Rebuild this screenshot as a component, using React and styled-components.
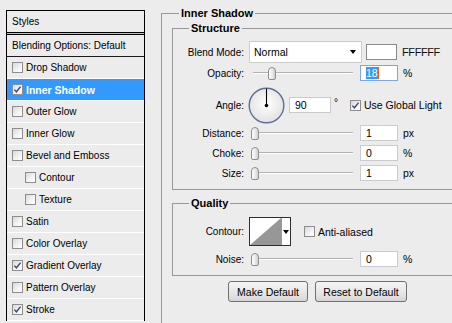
import React from "react";
import styled, { createGlobalStyle } from "styled-components";

const GlobalStyle = createGlobalStyle`
  html, body {
    margin: 0;
    padding: 0;
    background: #ececec;
  }
`;

const styleItems = [
  { name: "Drop Shadow" },
  { name: "Inner Shadow", checked: true, selected: true },
  { name: "Outer Glow" },
  { name: "Inner Glow" },
  { name: "Bevel and Emboss" },
  { name: "Contour", sub: true },
  { name: "Texture", sub: true },
  { name: "Satin" },
  { name: "Color Overlay" },
  { name: "Gradient Overlay", checked: true },
  { name: "Pattern Overlay" },
  { name: "Stroke", checked: true },
];

const Check = ({ checked }) => (
  <CheckBox>
    {checked ? (
      <svg width="9" height="9" viewBox="0 0 9 9">
        <path d="M1.4 4.6 L3.4 6.8 L7.6 1.6" fill="none" stroke="#3d4b73" strokeWidth="1.4" />
      </svg>
    ) : null}
  </CheckBox>
);

const Slider = ({ value }) => (
  <SliderWrap>
    <Track />
    <Thumb style={{ left: 2 + Math.round((value / 100) * 94) }} />
  </SliderWrap>
);

const Dial = () => (
  <DialWrap>
    <svg width="37" height="37" viewBox="0 0 37 37">
      <defs>
        <radialGradient id="dialFill" cx="50%" cy="45%" r="55%">
          <stop offset="0%" stopColor="#ffffff" />
          <stop offset="100%" stopColor="#e2e2e2" />
        </radialGradient>
      </defs>
      <circle cx="18.5" cy="18.5" r="17.3" fill="url(#dialFill)" stroke="#5d6f98" strokeWidth="1.4" />
      <line x1="18.5" y1="18.5" x2="18.5" y2="1.6" stroke="#000" strokeWidth="1.1" />
      <circle cx="18.5" cy="18.5" r="1.8" fill="#000" />
    </svg>
  </DialWrap>
);

const App = () => {
  return (
    <Page>
      <GlobalStyle />
      <LeftPanel>
        <Header>Styles</Header>
        <Divider />
        <BlendingRow>Blending Options: Default</BlendingRow>
        {styleItems.map((item) => (
          <StyleRow key={item.name} $sub={item.sub} $selected={item.selected}>
            <Check checked={item.checked} />
            <span>{item.name}</span>
          </StyleRow>
        ))}
      </LeftPanel>

      <OuterGroup>
        <Legend $left={17}>Inner Shadow</Legend>

        <Group $pad="12px 0 8px 0">
          <Legend $left={16}>Structure</Legend>

          <Row $h={22}>
            <Label>Blend Mode:</Label>
            <Select>
              <span>Normal</span>
              <Arrow />
            </Select>
            <Swatch />
            <HexText>FFFFFF</HexText>
          </Row>

          <Row $mt={2}>
            <Label>Opacity:</Label>
            <Slider value={18} />
            <Input $focused>
              <Selected>18</Selected>
              <Caret />
            </Input>
            <Unit>%</Unit>
          </Row>

          <Row $h={38} $mt={5}>
            <Label>Angle:</Label>
            <Dial />
            <AngleInput>90</AngleInput>
            <Degree>°</Degree>
            <CheckLabel $ml={12}>
              <Check checked />
              <span>Use Global Light</span>
            </CheckLabel>
          </Row>

          <Row $mt={1}>
            <Label>Distance:</Label>
            <Slider value={0} />
            <Input>1</Input>
            <Unit>px</Unit>
          </Row>

          <Row $mt={4}>
            <Label>Choke:</Label>
            <Slider value={0} />
            <Input>0</Input>
            <Unit>%</Unit>
          </Row>

          <Row $mt={4}>
            <Label>Size:</Label>
            <Slider value={0} />
            <Input>1</Input>
            <Unit>px</Unit>
          </Row>
        </Group>

        <Group $pad="13px 0 8px 0" $mt={13}>
          <Legend $left={16}>Quality</Legend>

          <Row $h={29}>
            <Label>Contour:</Label>
            <ContourPicker>
              <ContourPreview>
                <svg width="31" height="27" viewBox="0 0 31 27">
                  <polygon points="0,27 31,0 31,27" fill="#979797" />
                </svg>
              </ContourPreview>
              <ContourDrop>
                <Arrow />
              </ContourDrop>
            </ContourPicker>
            <CheckLabel $ml={13}>
              <Check />
              <span>Anti-aliased</span>
            </CheckLabel>
          </Row>

          <Row $mt={5}>
            <Label>Noise:</Label>
            <Slider value={0} />
            <Input>0</Input>
            <Unit>%</Unit>
          </Row>
        </Group>

        <Buttons>
          <Button $w={80}>Make Default</Button>
          <Button $w={92}>Reset to Default</Button>
        </Buttons>
      </OuterGroup>
    </Page>
  );
};

const Page = styled.div`
  display: flex;
  align-items: flex-start;
  width: 452px;
  height: 323px;
  overflow: hidden;
  background: #ececec;
  font-family: "Liberation Sans", Arial, sans-serif;
  font-size: 10px;
  color: #000;
`;

const LeftPanel = styled.div`
  flex-shrink: 0;
  box-sizing: border-box;
  width: 139px;
  margin: 10px 0 0 6px;
  border: 1px solid #000;
  border-bottom: none;
  background: #ececec;
`;

const Header = styled.div`
  height: 21px;
  line-height: 21px;
  padding-left: 5px;
`;

const Divider = styled.div`
  height: 1px;
  border-top: 1px solid #000;
  border-bottom: 1px solid #000;
  background: #bdbdbd;
`;

const BlendingRow = styled.div`
  height: 21px;
  line-height: 21px;
  padding-left: 5px;
  border-bottom: 1px solid #1a1a1a;
`;

const StyleRow = styled.div`
  display: flex;
  align-items: center;
  gap: 3px;
  height: 21px;
  padding-left: ${(p) => (p.$sub ? 18 : 5)}px;
  border-bottom: 1px solid #ffffff;
  background: ${(p) => (p.$selected ? "#3399ff" : "transparent")};
  color: ${(p) => (p.$selected ? "#fff" : "#000")};
  font-weight: ${(p) => (p.$selected ? "bold" : "normal")};
  font-size: ${(p) => (p.$selected ? "10.5px" : "10px")};
`;

const CheckBox = styled.span`
  flex-shrink: 0;
  box-sizing: border-box;
  display: flex;
  align-items: center;
  justify-content: center;
  width: 11px;
  height: 11px;
  border: 1px solid #8d8d8d;
  background: linear-gradient(135deg, #d9d9d9 0%, #f4f4f4 60%, #ffffff 100%);
`;

const OuterGroup = styled.div`
  position: relative;
  flex-shrink: 0;
  box-sizing: border-box;
  width: 320px;
  height: 400px;
  margin: 13px 0 0 16px;
  padding: 14px 0 0 10px;
  border: 1px solid #989898;
`;

const Group = styled.div`
  position: relative;
  box-sizing: border-box;
  width: 300px;
  margin-top: ${(p) => p.$mt || 0}px;
  padding: ${(p) => p.$pad};
  border: 1px solid #989898;
`;

const Legend = styled.span`
  position: absolute;
  top: -7px;
  left: ${(p) => p.$left}px;
  padding: 0 2px;
  background: #ececec;
  font-size: 11px;
  line-height: 13px;
  font-weight: bold;
`;

const Row = styled.div`
  display: flex;
  align-items: center;
  height: ${(p) => p.$h || 16}px;
  margin-top: ${(p) => p.$mt || 0}px;
`;

const Label = styled.div`
  flex-shrink: 0;
  width: 71px;
  margin-right: 5px;
  text-align: right;
`;

const Select = styled.div`
  flex-shrink: 0;
  box-sizing: border-box;
  display: flex;
  align-items: center;
  justify-content: space-between;
  width: 113px;
  height: 22px;
  padding: 0 5px 0 4px;
  border: 1px solid #cdcdcd;
  background: #fff;
  font-size: 10.5px;
`;

const Arrow = styled.span`
  width: 0;
  height: 0;
  border-left: 3px solid transparent;
  border-right: 3px solid transparent;
  border-top: 4px solid #000;
`;

const Swatch = styled.div`
  flex-shrink: 0;
  box-sizing: border-box;
  width: 31px;
  height: 16px;
  margin-left: 4px;
  border: 1px solid #888;
  background: #fff;
`;

const HexText = styled.span`
  margin-left: 5px;
  font-size: 11px;
  letter-spacing: -0.4px;
  color: #111;
`;

const SliderWrap = styled.div`
  position: relative;
  flex-shrink: 0;
  width: 104px;
  height: 16px;
`;

const Track = styled.div`
  position: absolute;
  left: 4px;
  right: 0;
  top: 7px;
  height: 0;
  border-top: 1px solid #b2b2b2;
  border-bottom: 1px solid #ffffff;
`;

const Thumb = styled.div`
  position: absolute;
  top: 2px;
  box-sizing: border-box;
  width: 8px;
  height: 13px;
  border: 1px solid #8e8e8e;
  border-radius: 4px 4px 2px 2px;
  background: linear-gradient(90deg, #ffffff 0%, #e6e6e6 60%, #cfcfcf 100%);
`;

const Input = styled.div`
  flex-shrink: 0;
  box-sizing: border-box;
  display: flex;
  align-items: center;
  width: 38px;
  height: 16px;
  margin-left: 7px;
  padding-left: 5px;
  border: 1px solid ${(p) => (p.$focused ? "#7fa9d9" : "#c9cbd0")};
  background: #fff;
  font-size: 10.5px;
`;

const AngleInput = styled(Input)`
  width: 42px;
  margin-left: 4px;
`;

const Selected = styled.span`
  background: #3399ff;
  color: #fff;
  line-height: 12px;
`;

const Caret = styled.span`
  width: 1px;
  height: 12px;
  background: #e0631a;
`;

const Unit = styled.span`
  margin-left: 5px;
  font-size: 10.5px;
`;

const Degree = styled.span`
  align-self: flex-start;
  margin: 11px 0 0 3px;
  font-size: 10px;
`;

const DialWrap = styled.div`
  flex-shrink: 0;
  width: 37px;
  height: 37px;
  margin-left: -1px;
`;

const CheckLabel = styled.div`
  display: flex;
  align-items: center;
  gap: 3px;
  margin-left: ${(p) => p.$ml || 0}px;
  font-size: 10.5px;
`;

const ContourPicker = styled.div`
  flex-shrink: 0;
  box-sizing: border-box;
  display: flex;
  width: 42px;
  height: 29px;
  border: 1px solid #2e2e2e;
  background: #fff;
`;

const ContourPreview = styled.div`
  width: 31px;
  height: 27px;
`;

const ContourDrop = styled.div`
  flex: 1;
  display: flex;
  align-items: center;
  justify-content: center;
  border-left: 1px solid #9a9a9a;
`;

const Buttons = styled.div`
  display: flex;
  gap: 7px;
  margin-top: 5px;
  padding-left: 56px;
`;

const Button = styled.button`
  box-sizing: border-box;
  width: ${(p) => p.$w}px;
  height: 21px;
  padding: 0;
  border: 1px solid #707070;
  border-radius: 3px;
  background: linear-gradient(#f4f4f4 0%, #e8e8e8 50%, #d6d6d6 100%);
  font-family: "Liberation Sans", Arial, sans-serif;
  font-size: 10.5px;
  color: #000;
`;

export default App;
